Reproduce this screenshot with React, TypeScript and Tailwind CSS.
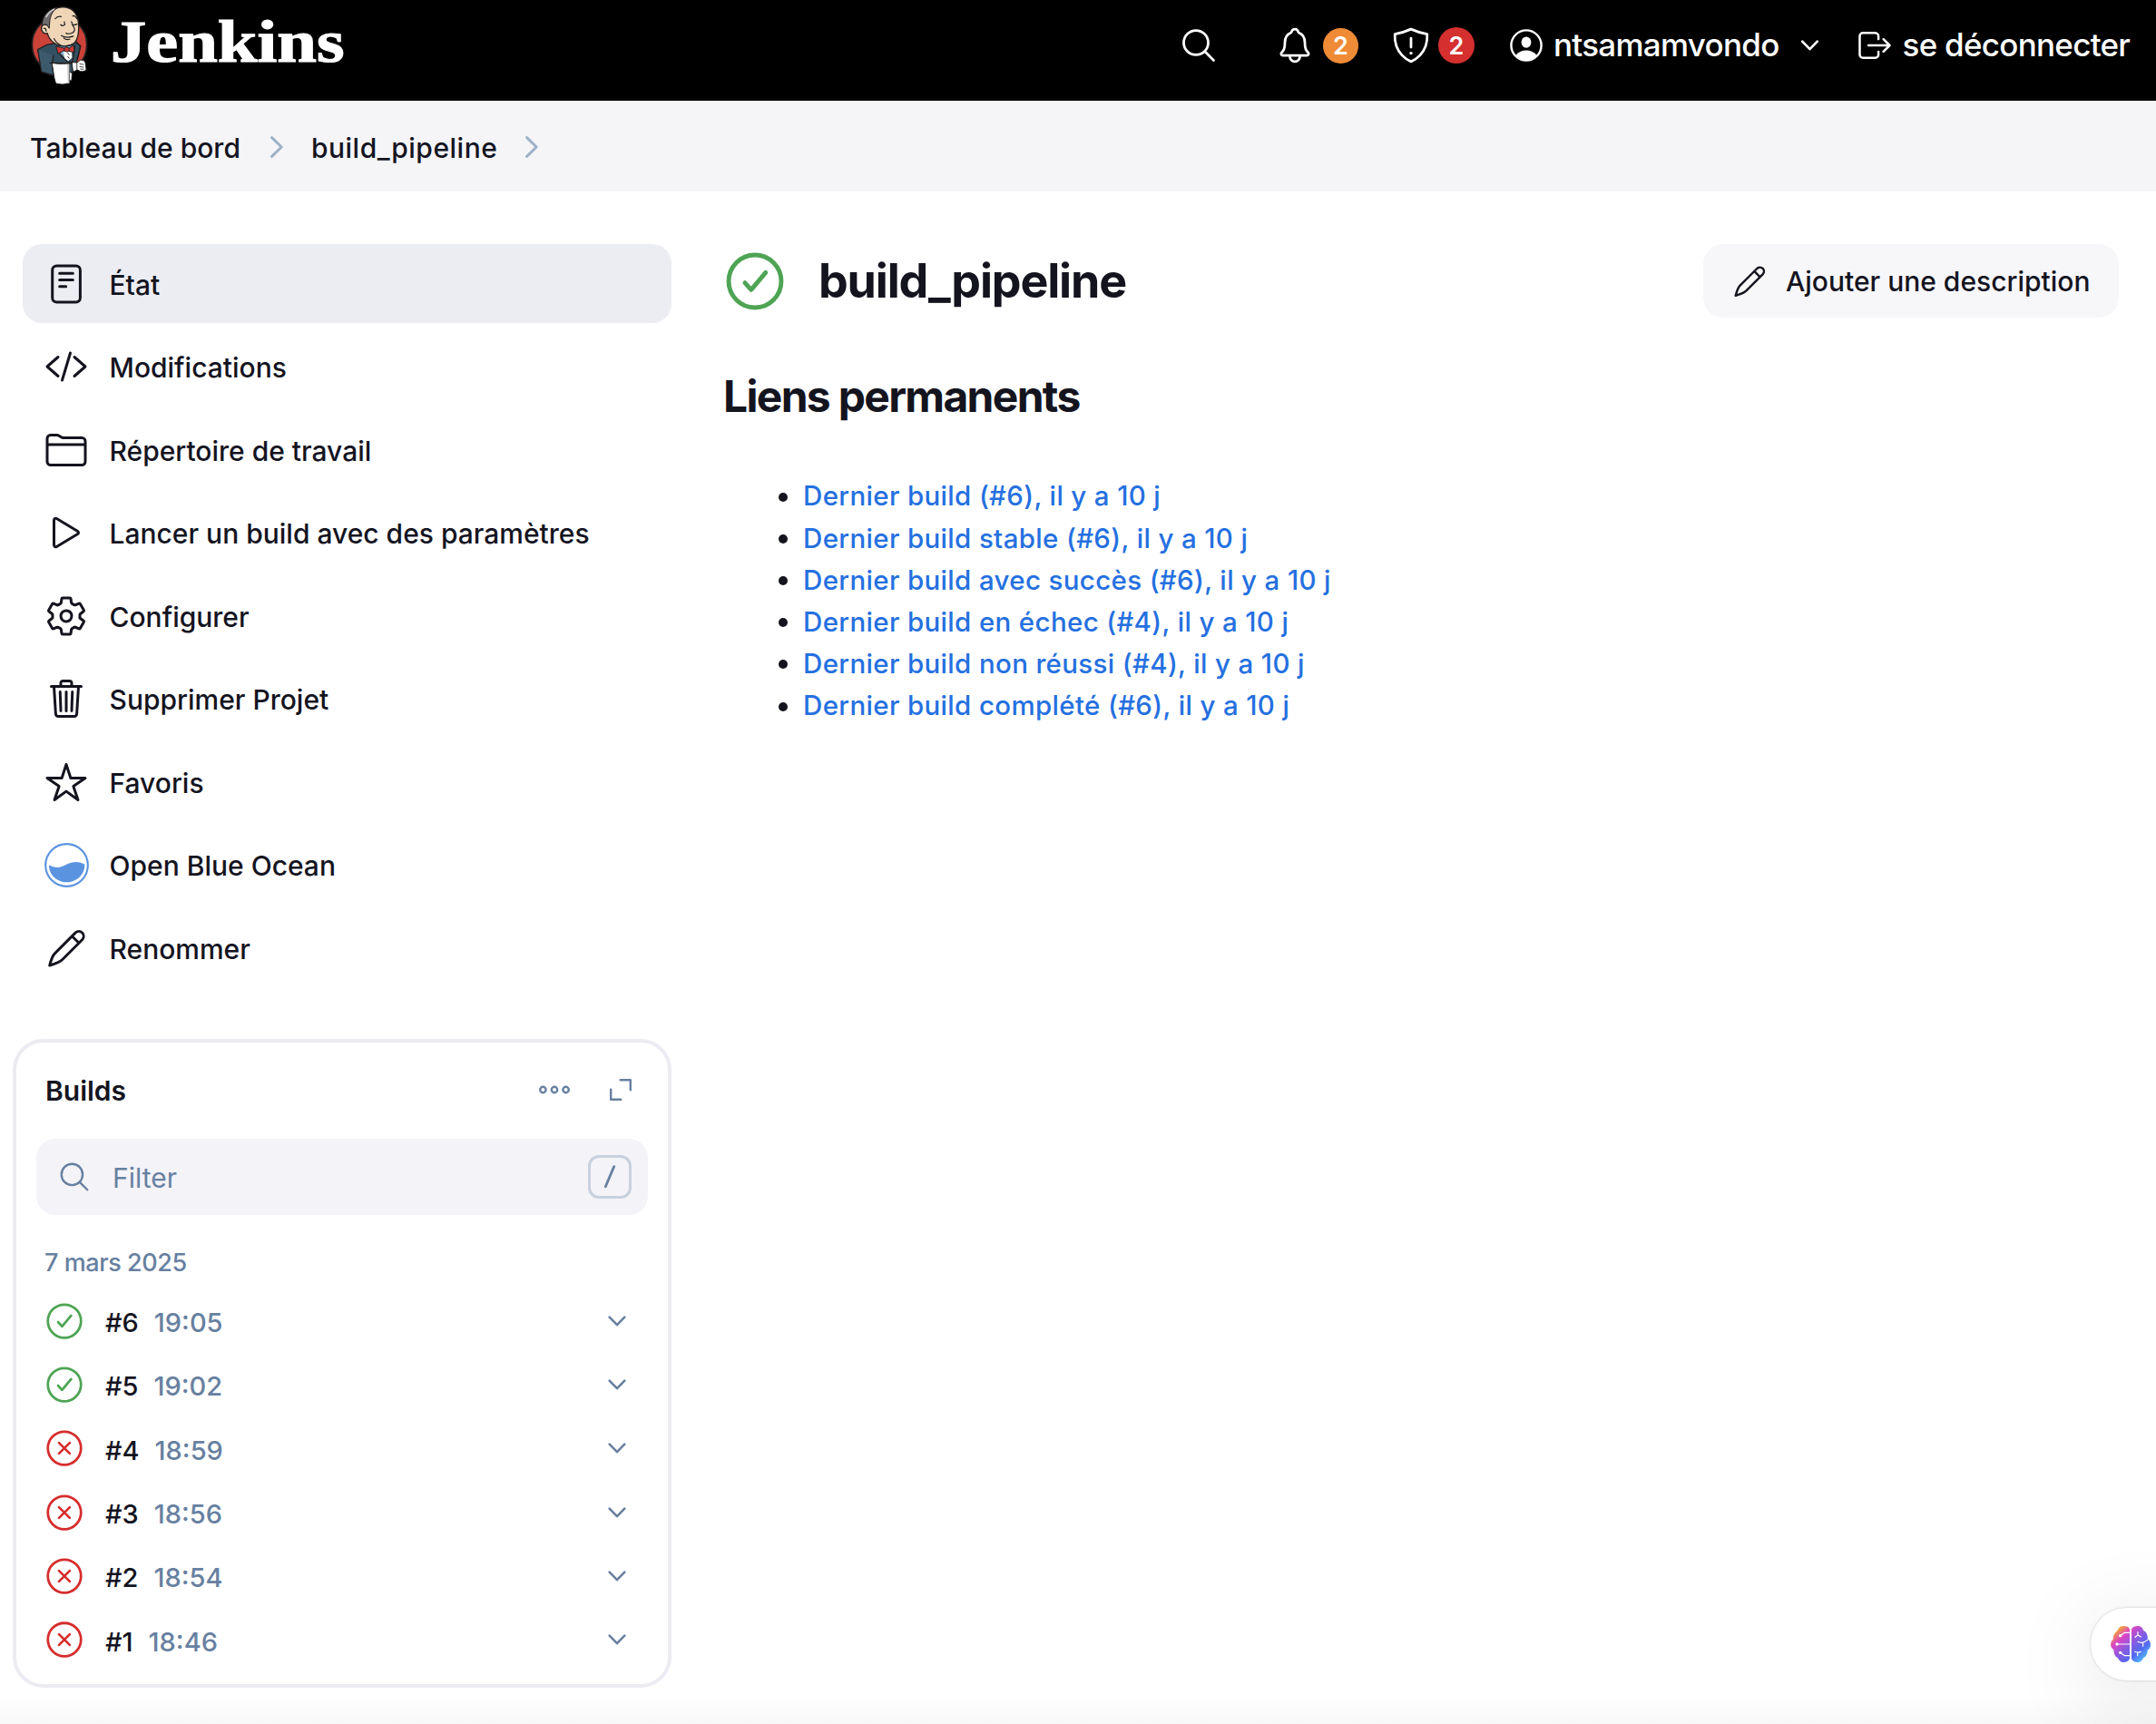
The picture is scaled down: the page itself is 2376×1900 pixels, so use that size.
import type { ReactNode } from "react";

type IconProps = { className?: string; children: ReactNode; stroke?: number };

function Icon({ className = "size-12", children, stroke = 32 }: IconProps) {
  return (
    <svg
      viewBox="0 0 512 512"
      className={`shrink-0 ${className}`}
      fill="none"
      stroke="currentColor"
      strokeWidth={stroke}
      strokeLinecap="round"
      strokeLinejoin="round"
    >
      {children}
    </svg>
  );
}

function SearchIcon({ className }: { className?: string }) {
  return (
    <Icon className={className}>
      <path d="M221.09 64a157.09 157.09 0 10157.09 157.09A157.1 157.1 0 00221.09 64zM338.29 338.29L448 448" />
    </Icon>
  );
}

function PencilIcon({ className = "size-12" }: { className?: string }) {
  return (
    <svg
      viewBox="0 0 144 144"
      className={`shrink-0 ${className}`}
      fill="none"
      stroke="currentColor"
      strokeWidth="8.8"
      strokeLinecap="round"
      strokeLinejoin="round"
    >
      <path d="M17 129Q25 98 34.7 88.7L102.7 20.7A16 16 0 0 1 125.3 43.3L59.3 109.3Q50 119 17 129zM91 32l23 23" />
    </svg>
  );
}

function StatusIcon({ ok, className, stroke }: { ok: boolean; className: string; stroke: number }) {
  return (
    <svg
      viewBox="0 0 64 64"
      className={`shrink-0 ${ok ? "text-[#4ea454]" : "text-[#d62d2d]"} ${className}`}
      fill="none"
      stroke="currentColor"
      strokeWidth={stroke}
      strokeLinecap="round"
      strokeLinejoin="round"
    >
      <circle cx="32" cy="32" r={31.4 - stroke / 2} />
      {ok ? <path d="M20.9 33.7l6.9 7.6 16-19" /> : <path d="M22.4 22.6l19 18.8M41.4 22.6l-19 18.8" />}
    </svg>
  );
}

function Chevron({ className }: { className: string }) {
  return (
    <svg
      viewBox="0 0 20 12"
      className={`shrink-0 ${className}`}
      fill="none"
      stroke="currentColor"
      strokeWidth="2.6"
      strokeLinecap="round"
      strokeLinejoin="round"
    >
      <path d="M1.7 1.7L10 10.2l8.3-8.5" />
    </svg>
  );
}

function Butler() {
  return (
    <svg viewBox="100 14 196 272" className="h-[91px] w-[65px] shrink-0" strokeLinejoin="round" strokeLinecap="round">
      <ellipse cx="198" cy="146" rx="91" ry="94" fill="#cb4239" stroke="#231f20" strokeWidth="5" />
      <path d="M158 146L126 162L136 204L138 236L178 249L246 236L268 152L250 132z" fill="#335061" stroke="#231f20" strokeWidth="4" />
      <path d="M126 162L138 236L178 248L174 206L178 182" fill="#3d5a6d" stroke="#231f20" strokeWidth="4" />
      <path d="M186 154L226 202L250 150z" fill="#8fb6d3" />
      <path d="M210 162L216 194L228 200L240 190L238 160z" fill="#fff" />
      <path
        d="M162 62C168 34 186 21 210 21C240 21 258 42 261 72C264 100 260 128 246 142C226 156 194 152 180 140C166 130 160 116 158 108C146 112 138 102 138 92C138 80 148 76 158 82C164 84 162 70 162 62z"
        fill="#f0d6b7"
        stroke="#231f20"
        strokeWidth="4"
      />
      <path d="M140 84C140 52 158 28 192 22C172 36 168 54 166 66L164 92L158 82C150 76 144 80 140 84z" fill="#6d6b6d" stroke="#231f20" strokeWidth="3" />
      <path d="M154 54C160 42 168 34 180 28" stroke="#d8d8d8" strokeWidth="4" fill="none" />
      <path
        d="M184 60Q192 50 204 53M242 51Q250 48 256 60M202 80Q208 86 216 80L214 70M238 70Q244 86 248 92Q250 104 238 108Q230 112 220 108M240 80Q248 82 256 78M204 116Q222 126 244 118M212 124Q222 132 232 128M146 92Q154 90 154 102M180 126Q188 142 202 148"
        fill="none"
        stroke="#231f20"
        strokeWidth="3.6"
      />
      <path d="M188 152L214 158L222 154L230 158L246 148L248 172L230 168L222 170L212 166L194 176z" fill="#d33833" stroke="#231f20" strokeWidth="3" />
      <path d="M214 158v9M230 158v9" stroke="#231f20" strokeWidth="3" />
      <path d="M226 174l4 5M226 186l4 5" stroke="#231f20" strokeWidth="3" />
      <path d="M200 180L224 202L246 204M250 150L242 200M254 140L268 150L258 196" fill="none" stroke="#231f20" strokeWidth="3.6" />
      <path d="M240 204L256 206L268 197Q282 196 284 206L287 228Q284 237 268 235L258 230L244 236z" fill="#fff" stroke="#231f20" strokeWidth="3" />
      <path d="M256 206v24M266 210l12 2M266 219l12 2M268 227l10 1" stroke="#231f20" strokeWidth="2.5" />
      <path d="M232 236l8 6-2 24-8-4z" fill="#fff" stroke="#231f20" strokeWidth="2" />
      <path d="M174 207Q200 212 231 208L231 274Q208 282 186 275Q180 258 178 238z" fill="#fff" stroke="#231f20" strokeWidth="3" />
      <path d="M224 210L226 276L231 274V208z" fill="#c9c9c9" />
      <path d="M166 207L240 208" stroke="#231f20" strokeWidth="4" />
    </svg>
  );
}

const nav: { label: string; icon: ReactNode; active?: boolean }[] = [
  {
    label: "État",
    active: true,
    icon: (
      <svg viewBox="0 0 144 144" className="size-12 shrink-0" fill="none" stroke="currentColor" strokeWidth="9" strokeLinecap="round">
        <rect x="26.2" y="12.2" width="92" height="119.6" rx="14" />
        <path d="M50 36.5h44M50 58.5h44M50 80.5h21" />
      </svg>
    ),
  },
  {
    label: "Modifications",
    icon: (
      <Icon>
        <path d="M160 368L32 256l128-112M352 368l128-112-128-112M304 96l-96 320" />
      </Icon>
    ),
  },
  {
    label: "Répertoire de travail",
    icon: (
      <Icon>
        <path d="M440 432H72a40 40 0 01-40-40V120a40 40 0 0140-40h75.89a40 40 0 0122.19 6.72l27.84 18.56a40 40 0 0022.19 6.72H440a40 40 0 0140 40v240a40 40 0 01-40 40zM32 192h448" />
      </Icon>
    ),
  },
  {
    label: "Lancer un build avec des paramètres",
    icon: (
      <Icon>
        <path d="M112 111v290c0 17.44 17 28.52 31 20.16l247.9-148.37c12.12-7.25 12.12-26.33 0-33.58L143 90.84c-14-8.36-31 2.72-31 20.16z" />
      </Icon>
    ),
  },
  {
    label: "Configurer",
    icon: (
      <Icon>
        <path d="M262.29 192.31a64 64 0 1057.4 57.4 64.13 64.13 0 00-57.4-57.4zM416.39 256a154.34 154.34 0 01-1.53 20.79l45.21 35.46a10.81 10.81 0 012.45 13.75l-42.77 74a10.81 10.81 0 01-13.14 4.59l-44.9-18.08a16.11 16.11 0 00-15.17 1.75A164.48 164.48 0 01325 400.8a15.94 15.94 0 00-8.82 12.14l-6.73 47.89a11.08 11.08 0 01-10.68 9.17h-85.54a11.11 11.11 0 01-10.69-8.87l-6.72-47.82a16.07 16.07 0 00-9-12.22 155.3 155.3 0 01-21.46-12.57 16 16 0 00-15.11-1.71l-44.89 18.07a10.81 10.81 0 01-13.14-4.58l-42.77-74a10.8 10.8 0 012.45-13.75l38.21-30a16.05 16.05 0 006-14.08c-.36-4.17-.58-8.33-.58-12.5s.21-8.27.58-12.35a16 16 0 00-6.07-13.94l-38.19-30A10.81 10.81 0 0149.48 186l42.77-74a10.81 10.81 0 0113.14-4.59l44.9 18.08a16.11 16.11 0 0015.17-1.75A164.48 164.48 0 01187 111.2a15.94 15.94 0 008.82-12.14l6.73-47.89A11.08 11.08 0 01213.23 42h85.54a11.11 11.11 0 0110.69 8.87l6.72 47.82a16.07 16.07 0 009 12.22 155.3 155.3 0 0121.46 12.57 16 16 0 0015.11 1.71l44.89-18.07a10.81 10.81 0 0113.14 4.58l42.77 74a10.8 10.8 0 01-2.45 13.75l-38.21 30a16.05 16.05 0 00-6.05 14.08c.33 4.14.55 8.3.55 12.47z" />
      </Icon>
    ),
  },
  {
    label: "Supprimer Projet",
    icon: (
      <Icon>
        <path d="M112 112l20 320c.95 18.49 14.4 32 32 32h184c17.67 0 30.87-13.51 32-32l20-320M80 112h352M192 112V72a23.93 23.93 0 0124-24h80a23.93 23.93 0 0124 24v40M256 176v224M184 176l8 224M328 176l-8 224" />
      </Icon>
    ),
  },
  {
    label: "Favoris",
    icon: (
      <Icon>
        <path d="M480 208H308L256 48l-52 160H32l140 96-54 160 138-100 138 100-54-160z" />
      </Icon>
    ),
  },
  {
    label: "Open Blue Ocean",
    icon: (
      <svg viewBox="0 0 146 146" className="size-[49px] shrink-0">
        <circle cx="73" cy="73" r="69.5" fill="none" stroke="#5a94e0" strokeWidth="6.4" />
        <path d="M15 73C38 84 52 82 72 71C94 60 110 60 132 70C133 104 106 129 73 129C41 129 14 104 15 73z" fill="#5a94e0" />
      </svg>
    ),
  },
  { label: "Renommer", icon: <PencilIcon /> },
];

const links = [
  "Dernier build (#6), il y a 10 j",
  "Dernier build stable (#6), il y a 10 j",
  "Dernier build avec succès (#6), il y a 10 j",
  "Dernier build en échec (#4), il y a 10 j",
  "Dernier build non réussi (#4), il y a 10 j",
  "Dernier build complété (#6), il y a 10 j",
];

const builds = [
  { id: "#6", time: "19:05", ok: true },
  { id: "#5", time: "19:02", ok: true },
  { id: "#4", time: "18:59", ok: false },
  { id: "#3", time: "18:56", ok: false },
  { id: "#2", time: "18:54", ok: false },
  { id: "#1", time: "18:46", ok: false },
];

function Header() {
  return (
    <header className="flex h-[111px] bg-black text-white">
      <div className="flex w-[1299px] items-start pt-[5px] pl-[33px]">
        <Butler />
        <span className="mt-[5px] ml-6 origin-left scale-x-[1.19] font-['Liberation_Serif',serif] text-[66px] leading-[72px] font-bold [-webkit-text-stroke:1.2px_white]">
          Jenkins
        </span>
      </div>
      <div className="flex h-[100px] items-center text-[35px] leading-none font-medium tracking-[-0.73px] whitespace-nowrap">
        <SearchIcon className="size-11" />
        <Icon className="ml-[62px] size-11">
          <path d="M427.68 351.43C402 320 383.87 304 383.87 217.35 383.87 138 343.35 109.73 310 96c-4.43-1.82-8.6-6-9.95-10.55C294.2 65.54 277.8 48 256 48s-38.21 17.55-44 37.47c-1.35 4.6-5.52 8.71-9.95 10.53-33.39 13.75-73.87 41.92-73.87 121.35C128.13 304 110 320 84.32 351.43 73.68 364.45 83 384 101.61 384h308.88c18.51 0 27.77-19.61 17.19-32.57zM320 384v16a64 64 0 01-128 0v-16" />
        </Icon>
        <span className="ml-[9px] flex size-[39px] items-center justify-center rounded-full bg-[#ef8b36] text-[27px] font-semibold tracking-normal">
          2
        </span>
        <Icon className="ml-[36px] size-11">
          <path d="M463.1 112.37C373.68 96.33 336.71 84.45 256 48c-80.71 36.45-117.68 48.33-207.1 64.37C32.7 369.13 240.58 457.79 256 464c15.42-6.21 223.3-94.87 207.1-351.63zM256 164v116" />
          <circle cx="256" cy="356" r="20" fill="currentColor" stroke="none" />
        </Icon>
        <span className="ml-[8px] flex size-10 items-center justify-center rounded-full bg-[#d52f2f] text-[27px] font-semibold tracking-normal">
          2
        </span>
        <svg viewBox="0 0 36 36" className="ml-[39px] size-9 shrink-0">
          <circle cx="18" cy="18" r="16.6" fill="none" stroke="currentColor" strokeWidth="2.4" />
          <ellipse cx="18" cy="14.6" rx="5.4" ry="6.1" fill="currentColor" />
          <path d="M6.5 29Q10.5 23.5 18 23.5T29.5 29Q25 34.5 18 34.5T6.5 29z" fill="currentColor" />
        </svg>
        <span className="ml-3 pb-[2px]">ntsamamvondo</span>
        <Chevron className="ml-[23px] h-3 w-[21px]" />
        <Icon className="ml-[39px] size-11" stroke={29}>
          <path d="M304 336v40a40 40 0 01-40 40H104a40 40 0 01-40-40V136a40 40 0 0140-40h152c22.09 0 48 17.91 48 40v40M368 336l80-80-80-80M176 256h256" />
        </Icon>
        <span className="ml-[9px] pb-[2px]">se déconnecter</span>
      </div>
    </header>
  );
}

function Crumb() {
  return (
    <svg viewBox="0 0 14 24" className="h-6 w-[14px] shrink-0" fill="none" stroke="#9fb1c7" strokeWidth="3" strokeLinecap="round" strokeLinejoin="round">
      <path d="M1.6 1.6L12.2 12L1.6 22.4" />
    </svg>
  );
}

function BuildsCard() {
  return (
    <section className="mt-[57px] ml-[14px] h-[715px] rounded-[34px] border-4 border-[#ebebf2] px-[22px] text-[#6780a0]">
      <div className="flex h-[106px] items-center pr-[18px] pl-[10px]">
        <h2 className="mr-auto text-[30px] leading-none font-semibold text-[#14141f]">Builds</h2>
        <svg viewBox="0 0 36 10" className="mt-[-3px] h-[10px] w-9" fill="none" stroke="currentColor" strokeWidth="2.4">
          <circle cx="5.4" cy="5" r="3.2" />
          <circle cx="18" cy="5" r="3.2" />
          <circle cx="30.6" cy="5" r="3.2" />
        </svg>
        <svg viewBox="0 0 24 24" className="mt-[-3px] ml-[43px] size-6" fill="none" stroke="currentColor" strokeWidth="2.4" strokeLinecap="round" strokeLinejoin="round">
          <path d="M11.7 1.2H22.8V12.3M1.2 11.7V22.8H12.3" />
        </svg>
      </div>
      <div className="flex h-[84px] items-center rounded-[21px] bg-[#f3f3f8] pr-[18px] pl-[23px]">
        <SearchIcon className="size-[38px]" />
        <span className="ml-[23px] pt-[2px] text-[30px] leading-none">Filter</span>
        <span className="ml-auto flex size-12 items-center justify-center rounded-[12px] border-[3px] border-[#c8d1dd]">
          <svg viewBox="0 0 14 26" className="h-[26px] w-[14px]" stroke="currentColor" strokeWidth="2.8" strokeLinecap="round">
            <path d="M11.7 1.6L2.3 23.8" />
          </svg>
        </span>
      </div>
      <div className="flex h-[81.5px] items-center pt-[24px] pl-[9px] text-[27px] leading-none font-medium tracking-[-0.43px]">
        7 mars 2025
      </div>
      {builds.map((b) => (
        <div key={b.id} className="flex h-[70.3px] items-center pr-[24px] pl-[11px] text-[29px] leading-none font-medium">
          <StatusIcon ok={b.ok} className="size-10" stroke={4.4} />
          <span className="ml-[25px] pt-1 text-[#14141f]">{b.id}</span>
          <span className="ml-[17px] pt-1">{b.time}</span>
          <Chevron className="ml-auto h-3 w-5" />
        </div>
      ))}
    </section>
  );
}

export default function App() {
  return (
    <div className="relative flex h-[1900px] w-[2376px] flex-col overflow-hidden bg-white font-['Inter',sans-serif] text-[#14141f]">
      <Header />
      <nav className="flex h-[100px] items-center bg-[#f5f5f8] pl-[33px] text-[30px] leading-none font-medium">
        <span className="pt-[3px]">Tableau de bord</span>
        <span className="ml-[33px] flex pt-px">
          <Crumb />
        </span>
        <span className="ml-[31px] pt-[3px] tracking-[0.5px]">build_pipeline</span>
        <span className="ml-[31px] flex pt-px">
          <Crumb />
        </span>
      </nav>

      <div className="flex pt-[58px]">
        <aside className="w-[740px] shrink-0">
          <ul className="flex flex-col gap-[4.5px] pl-[25px]">
            {nav.map((n) => (
              <li
                key={n.label}
                className={`flex h-[87px] items-center rounded-[21px] pl-6 text-[30px] leading-none font-medium ${n.active ? "bg-[#ecedf3]" : ""}`}
              >
                <span className="flex w-[71.5px] items-center">{n.icon}</span>
                <span className="pt-[2px]">{n.label}</span>
              </li>
            ))}
          </ul>
          <BuildsCard />
        </aside>

        <main className="flex-1 pr-[41px] pl-[60px]">
          <div className="flex h-[81px] items-center">
            <StatusIcon ok className="size-16" stroke={4.9} />
            <h1 className="ml-[38px] pt-px text-[52px] leading-none font-bold tracking-[-1.2px]">build_pipeline</h1>
            <button className="ml-auto flex h-[81px] w-[458px] items-center rounded-[22px] bg-[#f7f7fa] pl-[31px] text-[30px] leading-none font-medium">
              <PencilIcon className="size-10" />
              <span className="ml-[20px] pt-px">Ajouter une description</span>
            </button>
          </div>
          <h2 className="mt-[57px] -ml-[3px] flex h-[60px] items-center text-[48px] leading-none font-bold tracking-[-1.7px]">
            Liens permanents
          </h2>
          <ul className="mt-[57px] pl-[58px]">
            {links.map((l) => (
              <li key={l} className="flex h-[46.2px] items-center">
                <span className="mt-px size-[10px] rounded-full bg-[#14141f]" />
                <a className="ml-[17px] text-[29.5px] leading-none font-medium tracking-[0.34px] text-[#2570e0]">{l}</a>
              </li>
            ))}
          </ul>
        </main>
      </div>

      <div className="absolute inset-x-0 bottom-0 h-8 bg-linear-to-b from-transparent to-black/[0.03]" />
      <div className="absolute top-[1772px] left-[2304px] flex h-20 w-[120px] items-center rounded-l-[40px] bg-white pl-[22px] shadow-[0_0_3px_rgba(0,0,0,0.2),0_20px_100px_rgba(0,0,0,0.12)]">
        <svg viewBox="0 0 132 120" className="h-10 w-11">
          <defs>
            <linearGradient id="brain" x1="0" y1="0" x2="1" y2="1">
              <stop offset="0.14" stopColor="#f3a33c" />
              <stop offset="0.3" stopColor="#dc45c4" />
              <stop offset="0.5" stopColor="#8a5be0" />
              <stop offset="0.7" stopColor="#5468f0" />
              <stop offset="0.9" stopColor="#4fc3ff" />
            </linearGradient>
          </defs>
          <path
            fill="url(#brain)"
            d="M63 10V108Q58 120 42 120Q30 120 24 106Q10 100 10 78Q0 72 0 60Q0 50 8 44Q8 26 22 16Q28 0 42 0Q58 0 63 10zM69 10Q76 0 90 0Q104 0 108 14Q124 22 122 42Q132 50 132 62Q132 74 122 80Q122 98 108 106Q102 120 90 120Q74 120 69 108z"
          />
          <g fill="none" stroke="#fff" strokeWidth="3.6" strokeLinecap="round">
            <path d="M63 22H46L32 32M63 60H21M63 98H46L32 88M90 20v10l-9 7M90 30l10 6M90 52Q106 60 122 46M107 56v11M80 85q8 4 20 0M89 88v10" />
          </g>
          <g fill="#fff">
            <circle cx="32" cy="32" r="5" />
            <circle cx="21" cy="60" r="5" />
            <circle cx="32" cy="88" r="5" />
          </g>
        </svg>
      </div>
    </div>
  );
}
